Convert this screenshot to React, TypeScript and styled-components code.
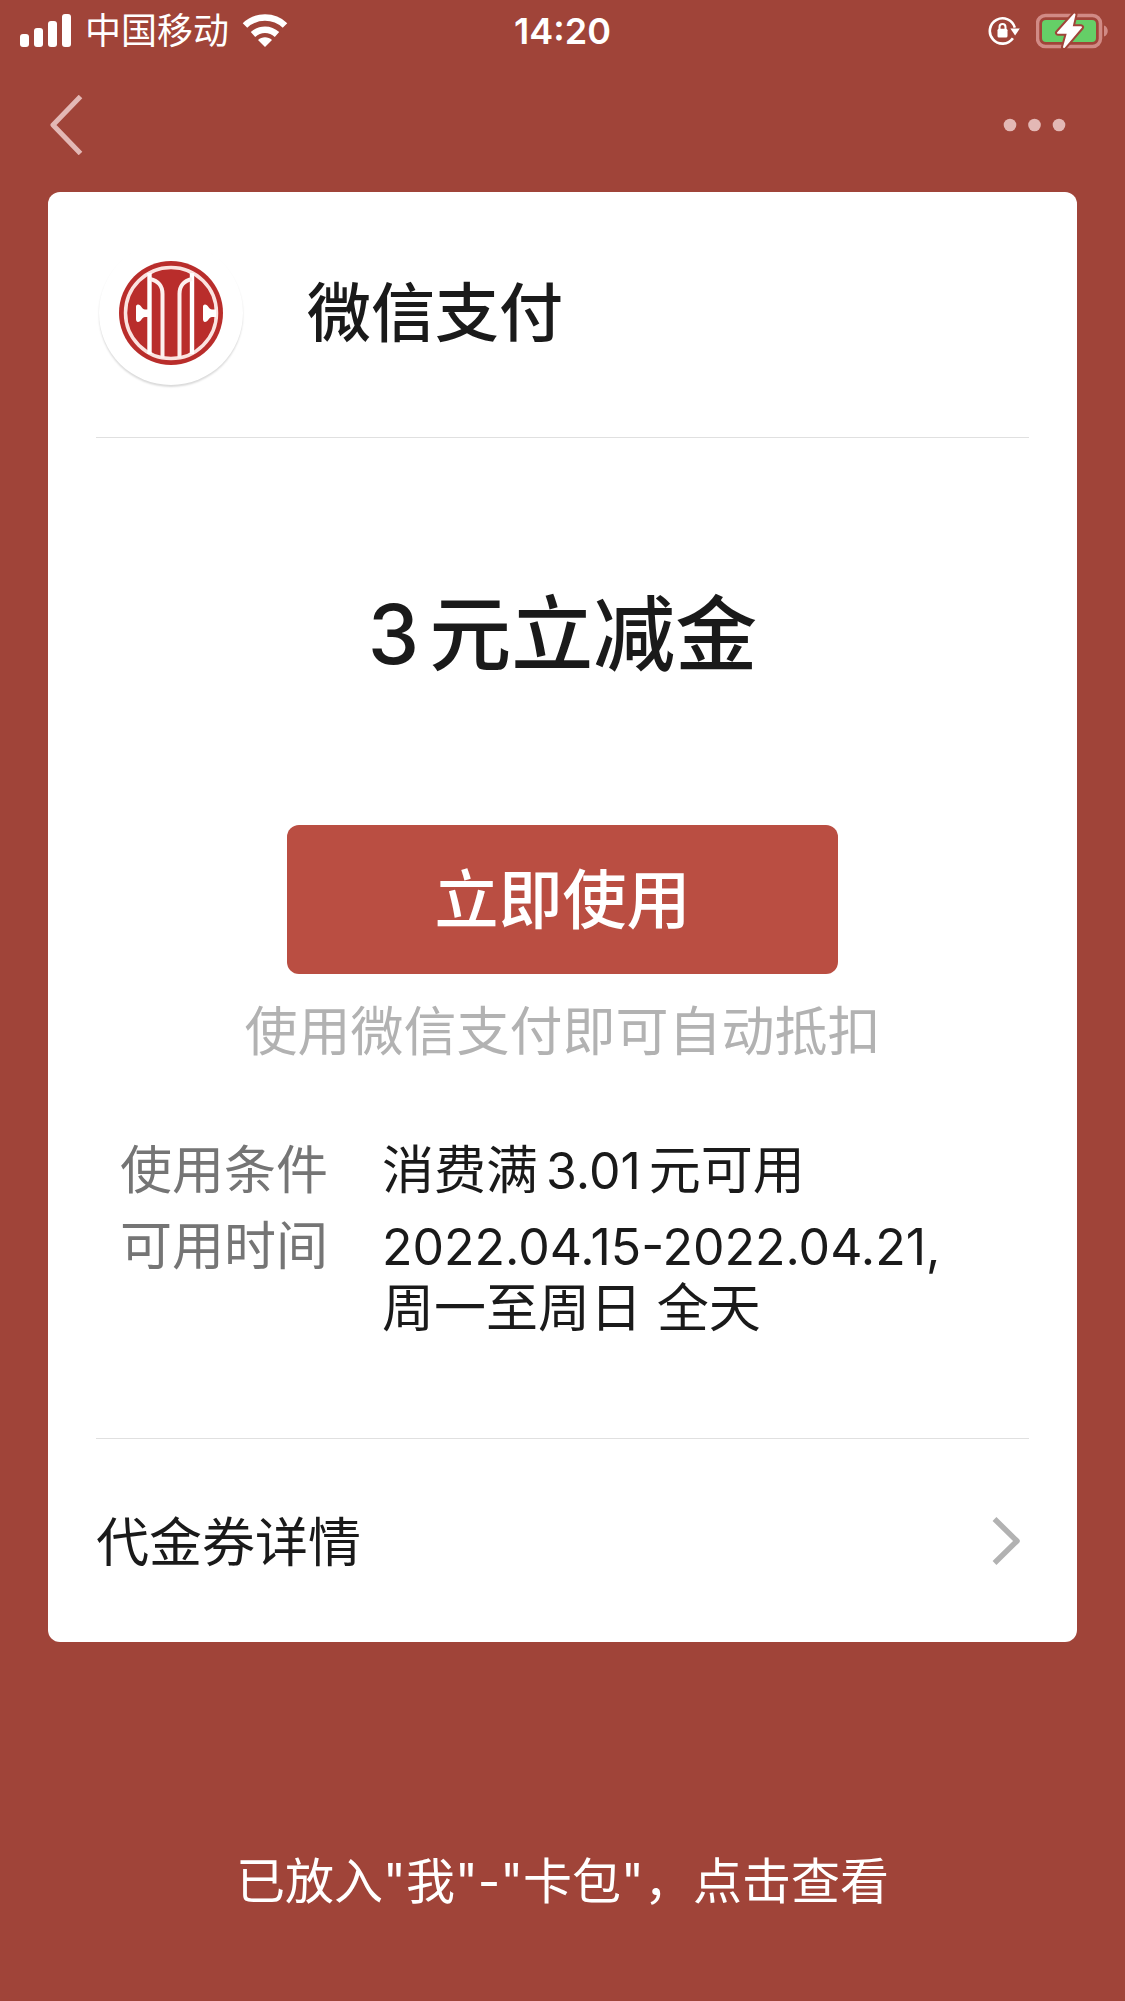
import React from "react";
import styled, { createGlobalStyle } from "styled-components";

const colors = {
  page: "#a04439",
  card: "#ffffff",
  button: "#ba4e42",
  ink: "#1a1a1a",
  label: "#757575",
  muted: "#b2b2b2",
  line: "#e0e0e0",
  nav: "#e3b8b5",
};

const GlobalStyle = createGlobalStyle`
  *, *::before, *::after { box-sizing: border-box; }
  body {
    margin: 0;
    background: ${colors.page};
    font-family: Inter, "Noto Sans CJK SC", sans-serif;
    color: ${colors.ink};
  }
  h1, h2, p, dl, dt, dd { margin: 0; font-weight: 400; }
  button { padding: 0; border: 0; background: none; color: inherit; font: inherit; cursor: pointer; }
  a { color: inherit; text-decoration: none; }
  svg { display: block; flex: none; }
`;

const Screen = styled.div`
  display: flex;
  flex-direction: column;
  min-height: 100vh;
`;

const StatusBar = styled.header`
  display: grid;
  grid-template-columns: 1fr auto 1fr;
  align-items: center;
  height: 62px;
  padding: 0 16px;
  color: #fff;
  font-size: 36px;
  line-height: 62px;
`;

const StatusGroup = styled.div<{ $end?: boolean; $gap: number }>`
  display: flex;
  align-items: center;
  justify-content: ${(p) => (p.$end ? "flex-end" : "flex-start")};
  gap: ${(p) => p.$gap}px;
  padding-left: 4px;
`;

const Carrier = styled.span`
  font-weight: 400;
`;

const Clock = styled.time`
  font-weight: 600;
`;

const NavBar = styled.nav`
  display: flex;
  align-items: center;
  justify-content: space-between;
  height: 130px;
  padding: 0 56px 4px 47px;
`;

const Card = styled.main`
  margin: 0 48px;
  padding: 0 48px;
  border-radius: 12px;
  background: ${colors.card};
`;

const Merchant = styled.div`
  display: flex;
  align-items: center;
  gap: 64px;
  height: 246px;
  padding: 0 0 4px 3px;
  border-bottom: 1px solid ${colors.line};
`;

const LogoFrame = styled.div`
  display: grid;
  place-items: center;
  width: 144px;
  height: 144px;
  border-radius: 50%;
  box-shadow: 0 2px 2px rgba(0, 0, 0, 0.15);
`;

const MerchantName = styled.h2`
  font-size: 64px;
  font-weight: 500;
  line-height: 96px;
`;

const Offer = styled.section`
  display: flex;
  flex-direction: column;
  align-items: center;
  padding: 137px 0 98px;
  border-bottom: 1px solid ${colors.line};
`;

const OfferTitle = styled.h1`
  margin-bottom: 130px;
  font-size: 82px;
  font-weight: 500;
  line-height: 120px;
`;

const Count = styled.span`
  margin-right: 10px;
`;

const UseButton = styled.button`
  width: 100%;
  max-width: 551px;
  height: 149px;
  padding-bottom: 10px;
  border-radius: 12px;
  background: ${colors.button};
  color: #fff;
  font-size: 64px;
  font-weight: 500;
`;

const Hint = styled.p`
  margin-top: 20px;
  color: ${colors.muted};
  font-size: 53px;
  line-height: 76px;
`;

const Terms = styled.dl`
  display: grid;
  grid-template-columns: auto 1fr;
  gap: 14px 54px;
  width: 100%;
  margin-top: 70px;
  padding: 0 24px;
  font-size: 52px;
  line-height: 62px;
`;

const TermLabel = styled.dt`
  color: ${colors.label};
`;

const Figures = styled.span<{ $inline?: boolean }>`
  margin: 0 ${(p) => (p.$inline ? 8 : 0)}px;
  font-size: 50px;
`;

const DetailsLink = styled.a`
  display: flex;
  align-items: center;
  justify-content: space-between;
  height: 203px;
  padding-right: 8px;
  font-size: 53px;
`;

const DetailsText = styled.span`
  padding-bottom: 4px;
`;

const Footer = styled.footer`
  display: flex;
  justify-content: center;
  padding: 204px 24px 81px;
  color: #fff;
  font-size: 49px;
  line-height: 72px;
`;

const SignalIcon = () => (
  <svg width="52" height="34" viewBox="0 0 52 34" fill="#fff" aria-hidden="true">
    <rect x="0" y="20" width="9" height="13" rx="3" />
    <rect x="14" y="14" width="9" height="19" rx="3" />
    <rect x="28" y="7" width="9" height="26" rx="3" />
    <rect x="42" y="0" width="9" height="33" rx="3" />
  </svg>
);

const WifiIcon = () => (
  <svg width="46" height="34" viewBox="0 0 46 34" fill="none" aria-hidden="true">
    <path d="M3 11.500C14 .9 32 .9 43 11.500" stroke="#fff" strokeWidth="6.500" />
    <path d="M11 20.500C18 14 28 14 35 20.500" stroke="#fff" strokeWidth="6.500" />
    <path d="M23 33l-7-7c3.800-3.800 10.200-3.800 14 0z" fill="#fff" />
  </svg>
);

const RotationLockIcon = () => (
  <svg width="32" height="30" viewBox="0 0 32 30" fill="none" aria-hidden="true">
    <path d="M24.900 22.300A12.700 12.700 0 1 1 26.800 11.700" stroke="#fff" strokeWidth="2.600" />
    <path d="M22.400 12.500h9.400l-4.700 7z" fill="#fff" />
    <rect x="9.500" y="12.800" width="10" height="8.800" rx="1.500" fill="#fff" />
    <path d="M11.500 14v-3a3 3 0 0 1 6 0v3" stroke="#fff" strokeWidth="2" />
  </svg>
);

const boltPath = "M38.500 1.500L22 19.800h10L28 34 45 14.200H35.500z";

const BatteryIcon = () => (
  <svg width="73" height="36" viewBox="0 0 73 36" fill="none" aria-hidden="true">
    <rect x="1.500" y="2.500" width="63" height="31" rx="8" stroke="#d18a85" strokeWidth="3.500" />
    <rect x="6" y="7" width="54" height="22" rx="4" fill="#65cf67" />
    <path d="M68 12.500c5 1.500 5 9.500 0 11z" fill="#d18a85" />
    <path d={boltPath} stroke={colors.page} strokeWidth="6" strokeLinejoin="round" />
    <path d={boltPath} fill="#fff" stroke="#fff" strokeWidth="2" strokeLinejoin="round" />
  </svg>
);

const BackIcon = () => (
  <svg width="40" height="60" viewBox="0 0 40 60" fill="none" aria-hidden="true">
    <path d="M33.500 1.500L6 30l27.500 28.500" stroke={colors.nav} strokeWidth="5" strokeLinejoin="round" />
  </svg>
);

const MoreIcon = () => (
  <svg width="66" height="14" viewBox="0 0 66 14" fill={colors.nav} aria-hidden="true">
    <circle cx="7" cy="7" r="6.300" />
    <circle cx="31.500" cy="7" r="6.300" />
    <circle cx="56" cy="7" r="6.300" />
  </svg>
);

const BankLogo = () => (
  <svg width="104" height="104" viewBox="0 0 104 104" fill="none" role="img" aria-label="CITIC">
    <circle cx="52" cy="52" r="52" fill="#b92d2b" />
    <circle cx="52" cy="52" r="45.500" stroke="#fbe3e0" strokeWidth="3.500" />
    <g stroke="#fff" strokeWidth="4.400">
      <path d="M30.500 12v81M73 12v81" />
      <path d="M31 18c8 2 12.500 6 12.500 15v64M73 18c-8 2-12.500 6-12.500 15v64" stroke="#fdf0ee" strokeWidth="4" />
    </g>
    <path d="M30 48.500h-4c-3 0-4-5-7-5-1.500 0-2 1-2 2.500v12c0 1.500.5 3 2 3 3 0 4-5 7-5h4zM97 48.500h-4c-3 0-4-5-7-5-1.500 0-2 1-2 2.500v12c0 1.500.5 3 2 3 3 0 4-5 7-5h4z" fill="#fff" />
  </svg>
);

const ChevronIcon = () => (
  <svg width="30" height="50" viewBox="0 0 30 50" fill="none" aria-hidden="true">
    <path d="M3.500 3L26 25 3.500 47" stroke={colors.muted} strokeWidth="5.500" strokeLinejoin="round" />
  </svg>
);

export default function App() {
  return (
    <Screen>
      <GlobalStyle />
      <StatusBar>
        <StatusGroup $gap={13}>
          <SignalIcon />
          <Carrier>中国移动</Carrier>
          <WifiIcon />
        </StatusGroup>
        <Clock>14:20</Clock>
        <StatusGroup $end $gap={16}>
          <RotationLockIcon />
          <BatteryIcon />
        </StatusGroup>
      </StatusBar>
      <NavBar>
        <button type="button" aria-label="返回">
          <BackIcon />
        </button>
        <button type="button" aria-label="更多">
          <MoreIcon />
        </button>
      </NavBar>
      <Card>
        <Merchant>
          <LogoFrame>
            <BankLogo />
          </LogoFrame>
          <MerchantName>微信支付</MerchantName>
        </Merchant>
        <Offer>
          <OfferTitle>
            <Count>3</Count>元立减金
          </OfferTitle>
          <UseButton type="button">立即使用</UseButton>
          <Hint>使用微信支付即可自动抵扣</Hint>
          <Terms>
            <TermLabel>使用条件</TermLabel>
            <dd>
              消费满<Figures $inline>3.01</Figures>元可用
            </dd>
            <TermLabel>可用时间</TermLabel>
            <dd>
              <Figures>2022.04.15-2022.04.21,</Figures>
              <br />
              周一至周日 全天
            </dd>
          </Terms>
        </Offer>
        <DetailsLink href="#details">
          <DetailsText>代金券详情</DetailsText>
          <ChevronIcon />
        </DetailsLink>
      </Card>
      <Footer>
        <a href="#cards">已放入"我"-"卡包"，点击查看</a>
      </Footer>
    </Screen>
  );
}
